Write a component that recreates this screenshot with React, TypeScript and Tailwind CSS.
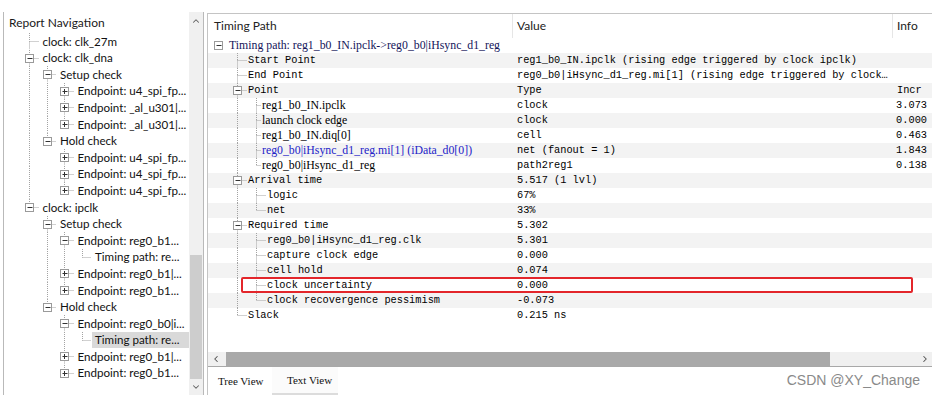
import { ChevronUp, ChevronDown, ChevronLeft, ChevronRight } from 'lucide-react'

type Node = {
  label: string
  state?: 'open' | 'closed'
  selected?: boolean
  value?: string
  info?: string
  tone?: 'root' | 'serif' | 'link'
  children?: Node[]
}

type Row = Node & { depth: number; guides: boolean[]; last: boolean }

function flatten(nodes: Node[], depth = 0, guides: boolean[] = []): Row[] {
  const out: Row[] = []
  nodes.forEach((n, i) => {
    const last = i === nodes.length - 1
    out.push({ ...n, depth, guides, last })
    if (n.state === 'open' && n.children) out.push(...flatten(n.children, depth + 1, [...guides, !last]))
  })
  return out
}

const ep = (label: string): Node => ({ label, state: 'closed' })

const navTree: Node[] = [
  { label: 'clock: clk_27m' },
  {
    label: 'clock: clk_dna',
    state: 'open',
    children: [
      { label: 'Setup check', state: 'open', children: [ep('Endpoint: u4_spi_fp...'), ep('Endpoint: _al_u301|...'), ep('Endpoint: _al_u301|...')] },
      { label: 'Hold check', state: 'open', children: [ep('Endpoint: u4_spi_fp...'), ep('Endpoint: u4_spi_fp...'), ep('Endpoint: u4_spi_fp...')] },
    ],
  },
  {
    label: 'clock: ipclk',
    state: 'open',
    children: [
      {
        label: 'Setup check',
        state: 'open',
        children: [
          { label: 'Endpoint: reg0_b1...', state: 'open', children: [{ label: 'Timing path: re...' }] },
          ep('Endpoint: reg0_b1|...'),
          ep('Endpoint: reg0_b1...'),
        ],
      },
      {
        label: 'Hold check',
        state: 'open',
        children: [
          { label: 'Endpoint: reg0_b0|i...', state: 'open', children: [{ label: 'Timing path: re...', selected: true }] },
          ep('Endpoint: reg0_b1|...'),
          ep('Endpoint: reg0_b1...'),
        ],
      },
    ],
  },
]

const pathTree: Node[] = [
  {
    label: 'Timing path: reg1_b0_IN.ipclk->reg0_b0|iHsync_d1_reg',
    state: 'open',
    tone: 'root',
    children: [
      { label: 'Start Point', value: 'reg1_b0_IN.ipclk (rising edge triggered by clock ipclk)' },
      { label: 'End Point', value: 'reg0_b0|iHsync_d1_reg.mi[1] (rising edge triggered by clock…' },
      {
        label: 'Point',
        state: 'open',
        value: 'Type',
        info: 'Incr',
        children: [
          { label: 'reg1_b0_IN.ipclk', value: 'clock', info: '3.073', tone: 'serif' },
          { label: 'launch clock edge', value: 'clock', info: '0.000', tone: 'serif' },
          { label: 'reg1_b0_IN.diq[0]', value: 'cell', info: '0.463', tone: 'serif' },
          { label: 'reg0_b0|iHsync_d1_reg.mi[1] (iData_d0[0])', value: 'net (fanout = 1)', info: '1.843', tone: 'link' },
          { label: 'reg0_b0|iHsync_d1_reg', value: 'path2reg1', info: '0.138', tone: 'serif' },
        ],
      },
      {
        label: 'Arrival time',
        state: 'open',
        value: '5.517 (1 lvl)',
        children: [
          { label: 'logic', value: '67%' },
          { label: 'net', value: '33%' },
        ],
      },
      {
        label: 'Required time',
        state: 'open',
        value: '5.302',
        children: [
          { label: 'reg0_b0|iHsync_d1_reg.clk', value: '5.301' },
          { label: 'capture clock edge', value: '0.000' },
          { label: 'cell hold', value: '0.074' },
          { label: 'clock uncertainty', value: '0.000' },
          { label: 'clock recovergence pessimism', value: '-0.073' },
        ],
      },
      { label: 'Slack', value: '0.215 ns' },
    ],
  },
]

// dotted tree guides + expander box, drawn per row
function Lines({ row, indent, h, trim = 0, noRootLines }: { row: Row; indent: number; h: number; trim?: number; noRootLines?: boolean }) {
  const w = (row.depth + 1) * indent - trim
  const cy = Math.floor(h / 2) + 0.5
  const colX = (l: number) => Math.floor(l * indent + indent / 2) + 0.5
  const cx = colX(row.depth)
  const dot = { stroke: '#a3a3a3', strokeDasharray: '1 1', strokeWidth: 1 }
  const showOwn = !(noRootLines && row.depth === 0)
  return (
    <svg width={w} height={h} className="block shrink-0">
      {row.guides.map((g, i) =>
        g && !(noRootLines && i === 0) ? <line key={i} x1={colX(i)} y1={0} x2={colX(i)} y2={h} {...dot} /> : null
      )}
      {showOwn && <line x1={cx} y1={0} x2={cx} y2={cy} {...dot} />}
      {showOwn && !row.last && <line x1={cx} y1={cy} x2={cx} y2={h} {...dot} />}
      {showOwn && <line x1={cx} y1={cy} x2={w} y2={cy} {...dot} />}
      {row.state && (
        <g>
          <rect x={cx - 4} y={cy - 4} width={8} height={8} fill="#fff" stroke="#9a9a9a" />
          <line x1={cx - 2} y1={cy} x2={cx + 3} y2={cy} stroke="#333" />
          {row.state === 'closed' && <line x1={cx} y1={cy - 2.5} x2={cx} y2={cy + 2.5} stroke="#333" />}
        </g>
      )}
    </svg>
  )
}

function NavPanel() {
  const rows = flatten(navTree)
  return (
    <div className="ml-[3px] mt-[12px] h-[383px] w-[201px] border-l border-r border-[#b9b9b9] flex">
      <div className="flex-1 flex flex-col min-w-0">
        <div className="h-[21px] pl-[5px] flex items-center text-[12px] text-[#1a1a1a]">Report Navigation</div>
        <div className="pl-[17px] flex flex-col">
          {rows.map((r, i) => (
            <div key={i} className="h-[16.6px] flex items-center">
              <Lines row={r} indent={17.5} h={16.6} />
              <span
                className={
                  r.selected
                    ? 'flex-1 ml-[1px] pl-[3px] h-full flex items-center bg-[#d9d9d9] text-[11.6px] text-[#111] whitespace-nowrap'
                    : 'ml-[4px] text-[11.6px] text-[#111] whitespace-nowrap'
                }
              >
                {r.label}
              </span>
            </div>
          ))}
        </div>
      </div>
      <div className="w-[14px] bg-[#f0f0f0] flex flex-col">
        <div className="h-[17px] flex items-center justify-center text-[#606060]">
          <ChevronUp size={10} strokeWidth={2.5} />
        </div>
        <div className="flex-1 flex flex-col justify-end">
          <div className="h-[124px] mx-[1px] bg-[#cdcdcd]" />
        </div>
        <div className="h-[16px] flex items-center justify-center text-[#606060]">
          <ChevronDown size={10} strokeWidth={2.5} />
        </div>
      </div>
    </div>
  )
}

function labelClass(tone?: Node['tone']) {
  if (tone === 'root') return "ml-[1px] whitespace-nowrap font-['Liberation_Serif',serif] text-[11.8px] text-[#14145a]"
  if (tone === 'serif') return "ml-[1px] whitespace-nowrap font-['Liberation_Serif',serif] text-[11.8px]"
  if (tone === 'link') return "ml-[1px] whitespace-nowrap font-['Liberation_Serif',serif] text-[11.8px] text-[#2323c8]"
  return 'ml-[1px] whitespace-nowrap'
}

function PathPanel() {
  const rows = flatten(pathTree)
  return (
    <div className="relative ml-[3px] mt-[13px] w-[725px] h-[382px] border-l border-t border-[#c4c4c4] flex flex-col">
      <div className="h-[24px] flex text-[12px] text-[#222]">
        <div className="w-[305px] pl-[6px] flex items-center border-r border-[#e6e6e6]">Timing Path</div>
        <div className="w-[380px] pl-[4px] flex items-center border-r border-[#e6e6e6]">Value</div>
        <div className="flex-1 pl-[4px] flex items-center">Info</div>
      </div>
      <div className="flex flex-col font-['Liberation_Mono',monospace] text-[10.3px] text-black">
        {rows.map((r, i) => (
          <div key={i} className={i % 2 ? 'h-[15px] flex bg-[#f3f3f3]' : 'h-[15px] flex'}>
            <div className="w-[305px] pl-[1px] flex items-center overflow-hidden">
              <Lines row={r} indent={19} h={15} trim={r.tone === 'serif' || r.tone === 'link' ? 5 : 0} noRootLines />
              <span className={labelClass(r.tone)}>{r.label}</span>
            </div>
            <div className="w-[380px] pl-[4px] flex items-center whitespace-nowrap overflow-hidden">{r.value}</div>
            <div className={r.info === 'Incr' ? 'flex-1 pl-[4px] flex items-center' : 'flex-1 pr-[5px] flex items-center justify-end'}>
              {r.info}
            </div>
          </div>
        ))}
      </div>
      <div className="flex-1" />
      <div className="h-[14px] bg-[#f0f0f0] flex items-stretch">
        <div className="w-[15px] flex items-center justify-center text-[#505050]">
          <ChevronLeft size={10} strokeWidth={2.5} />
        </div>
        <div className="flex-1 pl-[3px] flex">
          <div className="w-[604px] bg-[#a9a9a9]" />
        </div>
        <div className="w-[15px] flex items-center justify-center text-[#505050]">
          <ChevronRight size={10} strokeWidth={2.5} />
        </div>
      </div>
      <div className="flex-1 border-t border-[#a8a8a8] flex items-stretch font-['Liberation_Serif',serif] text-[11px] text-[#111]">
        <div className="w-[64px] pl-[10px] flex items-center">Tree View</div>
        <div className="w-[66px] pl-[15px] flex items-center bg-[#fbfbfb] border-b-2 border-[#dcdcdc]">Text View</div>
        <div className="ml-auto mr-[12px] flex items-center font-['Liberation_Sans',sans-serif] text-[14px] text-[#8a8a8a]">
          CSDN @XY_Change
        </div>
      </div>
      {/* red annotation box over the clock uncertainty row */}
      <div className="absolute left-[33px] top-[263px] w-[672px] h-[16px] border-2 border-[#e3262b] rounded-[2px]" />
    </div>
  )
}

export default function App() {
  return (
    <div className="w-[936px] h-[403px] bg-white flex overflow-hidden font-['Lato',sans-serif]">
      <NavPanel />
      <PathPanel />
    </div>
  )
}
